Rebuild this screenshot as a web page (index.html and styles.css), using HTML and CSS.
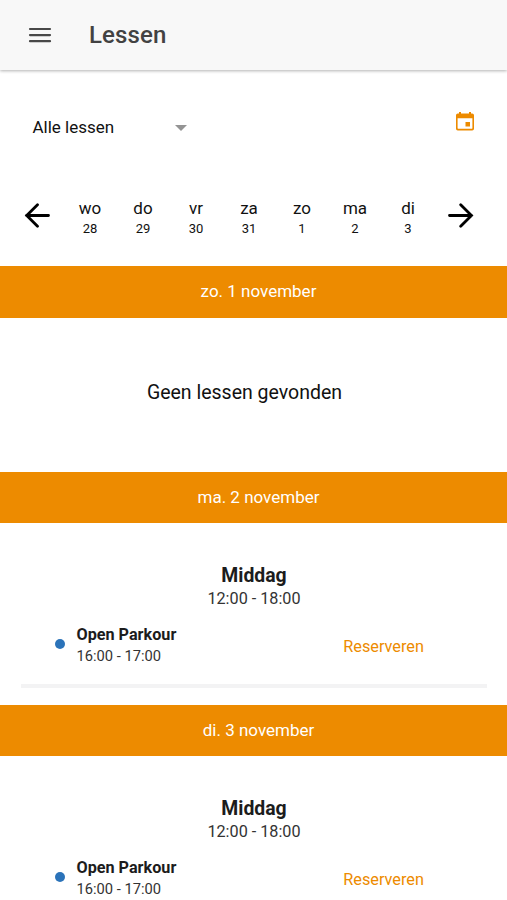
FILE: index.html
```html
<!DOCTYPE html>
<html lang="nl">
<head>
<meta charset="utf-8">
<title>Lessen</title>
<link rel="stylesheet" href="styles.css">
</head>
<body>
<header class="topbar">
  <svg class="menu" viewBox="0 0 24 24"><path d="M2 6h20M2 12.100h20M2 18.200h20"/></svg>
  <h1>Lessen</h1>
</header>
<main>
  <div class="filter">
    <div class="select"><span>Alle lessen</span><i class="caret"></i></div>
    <svg class="calendar" viewBox="0 0 20 20"><path fill-rule="evenodd" d="M4 1h2v1.500h8V1h2v1.500h1.200A1.800 1.800 0 0 1 19 4.300v13.400a1.800 1.800 0 0 1-1.800 1.800H2.800A1.800 1.800 0 0 1 1 17.700V4.300a1.800 1.800 0 0 1 1.800-1.800H4zM2.600 7.300v9.900c0 .3.200.5.500.5h13.800c.3 0 .5-.2.500-.5V7.300zM10.500 11H15v4.500h-4.500z"/></svg>
  </div>
  <nav class="week">
    <svg class="arrow" viewBox="0 0 26 26"><path d="M24.500 13.500H2.500M13.500 2.700L2.700 13.500l10.800 10.800"/></svg>
    <div class="days">
      <div><b>wo</b><small>28</small></div>
      <div><b>do</b><small>29</small></div>
      <div><b>vr</b><small>30</small></div>
      <div><b>za</b><small>31</small></div>
      <div><b>zo</b><small>1</small></div>
      <div><b>ma</b><small>2</small></div>
      <div><b>di</b><small>3</small></div>
    </div>
    <svg class="arrow" viewBox="0 0 26 26"><path d="M1.500 13.500h22M12.700 2.700l10.800 10.800-10.800 10.800"/></svg>
  </nav>
  <h2>zo. 1 november</h2>
  <p class="empty">Geen lessen gevonden</p>
  <h2>ma. 2 november</h2>
  <section class="block">
    <h3>Middag</h3>
    <p class="range">12:00 - 18:00</p>
    <div class="lesson">
      <i class="dot"></i>
      <div class="info"><strong>Open Parkour</strong><span>16:00 - 17:00</span></div>
      <a class="reserve">Reserveren</a>
    </div>
  </section>
  <h2>di. 3 november</h2>
  <section class="block">
    <h3>Middag</h3>
    <p class="range">12:00 - 18:00</p>
    <div class="lesson">
      <i class="dot"></i>
      <div class="info"><strong>Open Parkour</strong><span>16:00 - 17:00</span></div>
      <a class="reserve">Reserveren</a>
    </div>
  </section>
</main>
</body>
</html>
```

FILE: styles.css
```css
* { box-sizing: border-box; margin: 0; padding: 0; }
html, body { height: 900px; overflow: hidden; }
body { background: #fff; color: #1c1c1c; font-family: Roboto, sans-serif; }
.topbar { height: 70px; display: flex; align-items: center; padding-left: 28px; background: #f8f8f8; box-shadow: 0 1px 3px rgba(0,0,0,.3); }
.menu { width: 24px; height: 24px; fill: none; stroke: #484848; stroke-width: 2.2; stroke-linecap: round; }
h1 { margin-left: 37px; font-size: 24px; font-weight: 500; color: #424242; letter-spacing: .15px; }
.filter { height: 113px; padding: 41px 32px 0 32.5px; display: flex; justify-content: space-between; align-items: flex-start; }
.select { width: 154px; height: 32px; display: flex; justify-content: space-between; align-items: center; font-size: 17px; color: #111; }
.caret { border: 6px solid transparent; border-top-color: #949494; border-bottom: 0; margin-top: 2px; }
.calendar { width: 20px; height: 20px; fill: #ed8b00; }
.week { height: 83.4px; display: flex; align-items: flex-start; padding: 15px 33px 0 24px; }
.arrow { width: 26px; height: 26px; margin-top: 4px; fill: none; stroke: #000; stroke-width: 2.8; stroke-linecap: round; }
.days { width: 371px; margin: 0 13.5px; display: grid; grid-template-columns: repeat(7, 1fr); text-align: center; color: #111; }
.days b { display: block; font-weight: 400; font-size: 17px; line-height: 20px; }
.days small { display: block; font-size: 13px; line-height: 22px; }
h2 { height: 51.5px; background: #ed8b00; color: #fff; font-weight: 400; font-size: 17px; line-height: 51px; text-align: center; padding-left: 10px; }
.empty { height: 153.7px; line-height: 149px; text-align: center; font-size: 19.5px; color: #111; padding-right: 18px; }
.block { height: 181.7px; padding: 41px 20px 0 21px; }
h3 { font-size: 19.4px; line-height: 24px; font-weight: 700; text-align: center; }
.range { font-size: 16.2px; line-height: 22px; text-align: center; color: #333; }
.lesson { height: 78px; padding: 15px 63px 0 33.5px; display: flex; align-items: flex-start; border-bottom: 4px solid #f3f3f4; }
.dot { width: 10px; height: 10px; border-radius: 50%; background: #2b73b9; margin-top: 13.8px; }
.info { margin-left: 12px; flex: 1; }
.info strong { display: block; font-size: 16.2px; line-height: 20px; }
.info span { display: block; font-size: 14.7px; line-height: 23px; color: #333; }
.reserve { margin-top: 12px; font-size: 16.3px; line-height: 20px; color: #ed8b00; }
```
